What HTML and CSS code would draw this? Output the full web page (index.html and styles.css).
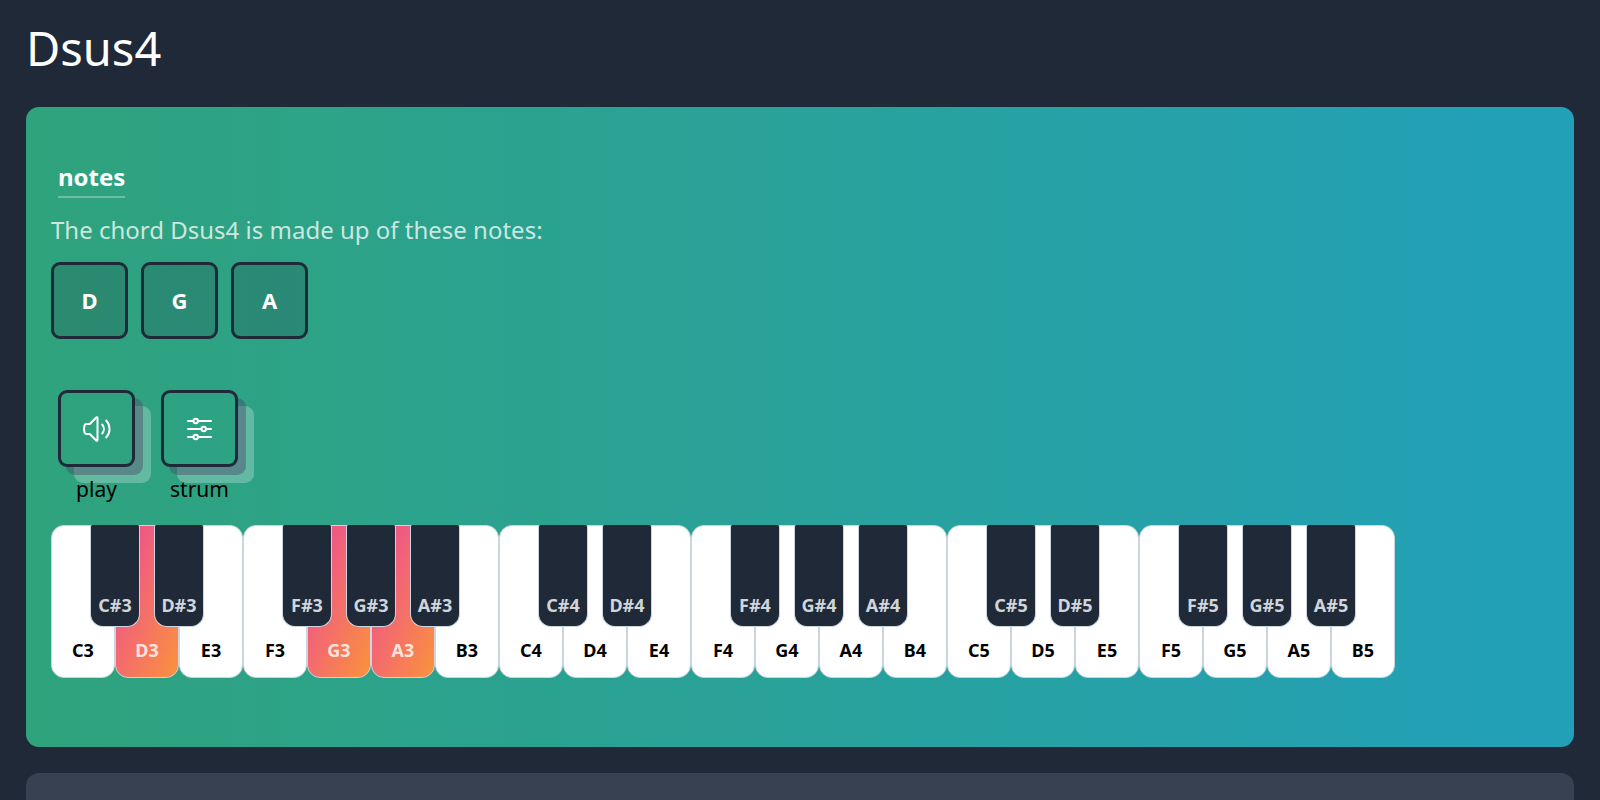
FILE: index.html
```
<!DOCTYPE html>
<html lang="en">
<head>
    <meta charset="UTF-8">
    <meta name="viewport" content="width=device-width, initial-scale=1.0">
    <title>Dsus4</title>
    <link rel="stylesheet" href="styles.css">
</head>
<body>

    <h1>Dsus4</h1>

    <main>
        <section class="card chord-card">
            <h2>notes</h2>
            <p class="intro">The chord Dsus4 is made up of these notes:</p>

            <ul class="note-list">
                <li class="note">D</li>
                <li class="note">G</li>
                <li class="note">A</li>
            </ul>

            <div class="controls">
                <div class="control">
                    <button id="play" class="btn" type="button" aria-labelledby="play-label">
                        <svg class="icon" viewBox="0 0 32 32" aria-hidden="true">
                            <path d="M16.500 5v22c0 .8-.8 1-1.300.5L8.800 21H5.500c-1 0-1.800-.6-2-1.600-.6-2.200-.6-4.600 0-6.800.2-1 1-1.600 2-1.600h3.300l6.400-6.500c.5-.5 1.300-.3 1.300.5z"/>
                            <path d="M21.200 11.500c2.200 2.600 2.200 6.400 0 9M25.200 7.500c4.400 4.800 4.400 12.200 0 17"/>
                        </svg>
                    </button>
                    <label id="play-label" for="play">play</label>
                </div>
                <div class="control">
                    <button id="strum" class="btn" type="button" aria-labelledby="strum-label">
                        <svg class="icon" viewBox="0 0 32 32" aria-hidden="true">
                            <path d="M4 8h5.500M14 8h13M4 16h13.500M22 16h5M4 24h5.500M14 24h13"/>
                            <circle cx="11.700" cy="8" r="2.200"/>
                            <circle cx="19.700" cy="16" r="2.200"/>
                            <circle cx="11.700" cy="24" r="2.200"/>
                        </svg>
                    </button>
                    <label id="strum-label" for="strum">strum</label>
                </div>
            </div>

            <div class="piano" id="piano"></div>
        </section>

        <section class="card next-card"></section>
    </main>

    <script>
        const noteNames = ['C', 'C#', 'D', 'D#', 'E', 'F', 'F#', 'G', 'G#', 'A', 'A#', 'B'];
        const chordNotes = ['D3', 'G3', 'A3'];

        const piano = document.getElementById('piano');
        for (let octave = 3; octave <= 5; octave++) {
            noteNames.forEach(name => {
                const key = document.createElement('button');
                key.type = 'button';
                key.textContent = name + octave;
                key.className = name.includes('#') ? 'key black-key' : 'key white-key';
                if (chordNotes.includes(name + octave)) {
                    key.classList.add('active');
                }
                piano.appendChild(key);
            });
        }
    </script>

</body>
</html>
```
FILE: styles.css
```
* {
    box-sizing: border-box;
}

body {
    margin: 0;
    padding: 0 26px;
    background-color: #1f2937;
    color: #fff;
    font-family: 'Noto Sans', 'Open Sans', sans-serif;
    font-size: 24px;
}

h1 {
    margin: 0;
    padding: 16px 0 27px;
    font-size: 47px;
    font-weight: 400;
    line-height: 64px;
}

.card {
    margin-bottom: 26px;
    border-radius: 13px;
}

.chord-card {
    padding: 51px 25px 69px;
    background: linear-gradient(to right, #2fa37c, #22a0b9);
}

.next-card {
    min-height: 400px;
    background-color: #374151;
}

h2 {
    width: fit-content;
    margin: 0 0 15px 7px;
    border-bottom: 2px solid rgba(255, 255, 255, 0.3);
    font-size: 24px;
    font-weight: 700;
    line-height: 38px;
}

.intro {
    margin: 0 0 15px;
    color: rgba(255, 255, 255, 0.75);
    line-height: 34px;
}

.note-list {
    display: flex;
    gap: 13px;
    margin: 0;
    padding: 0;
    list-style: none;
}

.note,
.btn {
    display: flex;
    justify-content: center;
    align-items: center;
    width: 77px;
    height: 77px;
    border: 3px solid #1f2937;
    border-radius: 9px;
    color: #fff;
}

.note {
    padding-bottom: 2px;
    background-color: rgba(31, 41, 55, 0.2);
    font-size: 22px;
    font-weight: 700;
}

.controls {
    display: flex;
    gap: 26px;
    margin: 51px 0 20px 7px;
}

.control {
    display: flex;
    flex-direction: column;
    align-items: center;
    gap: 6px;
    color: #000;
    font-size: 21px;
    line-height: 32px;
}

.btn {
    padding: 0;
    background: none;
    box-shadow: 8px 8px rgba(75, 63, 99, 0.4), 16px 16px rgba(255, 255, 255, 0.25);
    cursor: pointer;
}

.control label {
    z-index: 1;
}

.icon {
    width: 32px;
    height: 32px;
    fill: none;
    stroke: #fff;
    stroke-width: 2;
    stroke-linecap: round;
    stroke-linejoin: round;
}

.piano {
    display: flex;
}

.key {
    flex: none;
    display: flex;
    justify-content: center;
    align-items: flex-end;
    border: 1px solid #cbd5e1;
    font-family: inherit;
    font-size: 18px;
    font-weight: 700;
    line-height: 24px;
    cursor: pointer;
}

.white-key {
    width: 64px;
    height: 153px;
    padding: 0 0 15px;
    border-radius: 13px;
    background-color: #fff;
    color: #000;
}

.black-key {
    z-index: 1;
    width: 50px;
    height: 102px;
    margin: 0 -25px;
    padding: 0 0 9px;
    border-top: 0;
    border-radius: 2px 2px 13px 13px;
    background-color: #1f2937;
    color: #d1d5db;
}

.white-key.active {
    background: linear-gradient(to bottom right, #ec4899, #fb923c);
    color: rgba(255, 255, 255, 0.8);
}
```
